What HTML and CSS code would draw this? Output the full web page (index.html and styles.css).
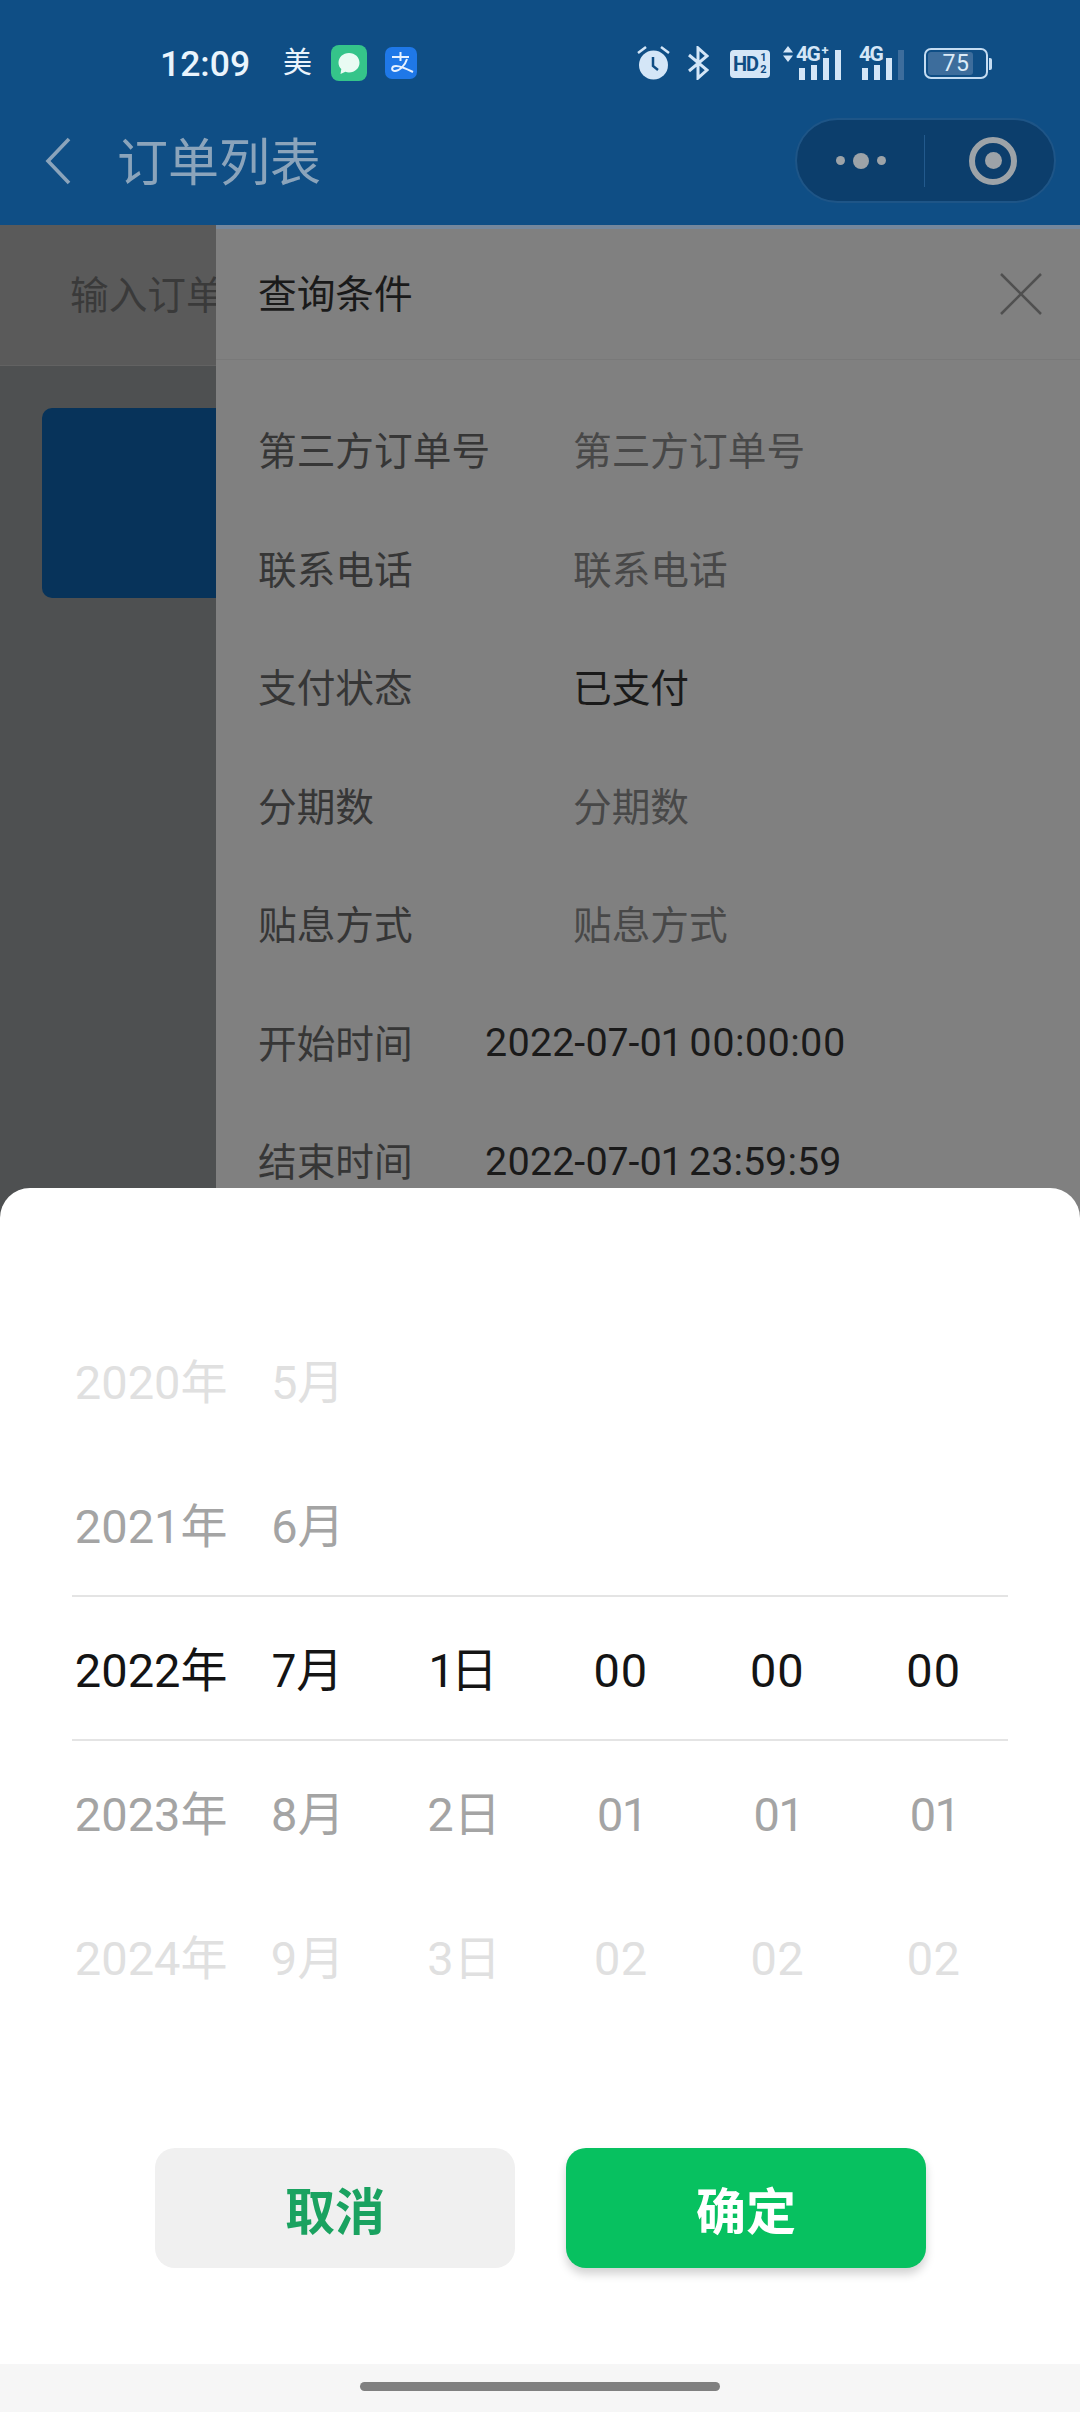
FILE: index.html
```html
<!DOCTYPE html>
<html lang="zh-CN">
<head>
    <meta charset="UTF-8">
    <meta name="viewport" content="width=device-width, initial-scale=1.0">
    <title>订单列表</title>
    <link rel="stylesheet" href="styles.css">
</head>
<body>
    <div class="screen">
        <header class="top-bar">
            <div class="status-bar">
                <span class="clock">12:09</span>
                <span class="status-char">美</span>
                <svg class="app-green" width="36" height="36" viewBox="0 0 36 36">
                    <rect width="36" height="36" rx="8" fill="#35c48a"/>
                    <path d="M18 8c6 0 10.500 4.300 10.500 9.700S24 27.400 18 27.400c-1.300 0-2.500-.2-3.600-.6L9.500 29l.8-5c-1.800-1.700-2.800-3.900-2.800-6.300C7.500 12.300 12 8 18 8z" fill="#e9fbf3"/>
                </svg>
                <svg class="app-alipay" width="32" height="32" viewBox="0 0 32 32">
                    <rect width="32" height="32" rx="7" fill="#1f78e8"/>
                    <path d="M7 10h17M15.500 5v9M22 12c-2 7-8 12-12 12-4 0-4-5 1-5 4 0 11 3 17 6" fill="none" stroke="#e8f2ff" stroke-width="2"/>
                </svg>
                <div class="status-icons">
                    <svg class="icon-alarm" width="33" height="35" viewBox="0 0 33 35">
                        <circle cx="16.500" cy="20" r="14.500" fill="#d4e6f7"/>
                        <path d="M16 12v9l5 4" fill="none" stroke="#0f4d84" stroke-width="2.500"/>
                        <path d="M1 8l8-6M32 8l-8-6" stroke="#d4e6f7" stroke-width="2.500"/>
                    </svg>
                    <svg class="icon-bt" width="21" height="34" viewBox="0 0 21 34">
                        <path d="M1 9l18 15-9 8V2l9 8L1 25" fill="none" stroke="#d4e6f7" stroke-width="3"/>
                    </svg>
                    <span class="hd-badge">HD<span class="hd-sim">1<br>2</span></span>
                    <div class="signal signal-first">
                        <svg class="updown" width="10" height="16" viewBox="0 0 10 16">
                            <path d="M5 0l5 6.500H0zM5 16l5-6.500H0z" fill="#d4e6f7"/>
                        </svg>
                        <span class="net-label">4G<sup>+</sup></span>
                        <div class="bars">
                            <i class="bar b1"></i><i class="bar b2"></i><i class="bar b3"></i><i class="bar b4"></i>
                        </div>
                    </div>
                    <div class="signal signal-second">
                        <span class="net-label">4G</span>
                        <div class="bars">
                            <i class="bar b1"></i><i class="bar b2"></i><i class="bar b3"></i><i class="bar b4 off"></i>
                        </div>
                    </div>
                    <div class="battery">
                        <div class="battery-body"><span class="battery-fill"></span><span class="battery-text">75</span></div>
                        <span class="battery-nub"></span>
                    </div>
                </div>
            </div>
            <div class="nav-bar">
                <svg class="back" width="26" height="48" viewBox="0 0 26 48">
                    <path d="M24 2L3 24l21 22" fill="none" stroke="#8ba4bb" stroke-width="3.600"/>
                </svg>
                <h1 class="nav-title">订单列表</h1>
                <div class="capsule">
                    <div class="capsule-dots">
                        <i class="dot"></i><i class="dot big"></i><i class="dot"></i>
                    </div>
                    <span class="capsule-line"></span>
                    <div class="capsule-target"><i></i></div>
                </div>
            </div>
        </header>

        <main class="content">
            <section class="list-side">
                <div class="search-row">输入订单号</div>
                <div class="order-card"></div>
            </section>

            <aside class="filter-panel">
                <div class="filter-head">
                    <span class="filter-title">查询条件</span>
                    <svg width="44" height="44" viewBox="0 0 44 44">
                        <path d="M2 2l40 40M42 2L2 42" stroke="#505050" stroke-width="2.500"/>
                    </svg>
                </div>
                <div class="filter-list">
                    <div class="filter-row"><label>第三方订单号</label><span class="hint">第三方订单号</span></div>
                    <div class="filter-row"><label>联系电话</label><span class="hint">联系电话</span></div>
                    <div class="filter-row"><label>支付状态</label><span class="val">已支付</span></div>
                    <div class="filter-row"><label>分期数</label><span class="hint">分期数</span></div>
                    <div class="filter-row"><label>贴息方式</label><span class="hint">贴息方式</span></div>
                    <div class="filter-row"><label>开始时间</label><span class="val date">2022-07-01 00:00:00</span></div>
                    <div class="filter-row"><label>结束时间</label><span class="val date">2022-07-01 23:59:59</span></div>
                </div>
            </aside>
        </main>

        <div class="sheet">
            <div class="picker">
                <div class="picker-row far"><span>2020年</span><span>5月</span></div>
                <div class="picker-row near"><span>2021年</span><span>6月</span></div>
                <div class="picker-row current"><span>2022年</span><span>7月</span><span>1日</span><span>00</span><span>00</span><span>00</span></div>
                <div class="picker-row near"><span>2023年</span><span>8月</span><span>2日</span><span>01</span><span>01</span><span>01</span></div>
                <div class="picker-row far"><span>2024年</span><span>9月</span><span>3日</span><span>02</span><span>02</span><span>02</span></div>
            </div>
            <div class="sheet-buttons">
                <button class="btn btn-cancel">取消</button>
                <button class="btn btn-ok">确定</button>
            </div>
            <div class="home-strip"><span class="home-bar"></span></div>
        </div>
    </div>
</body>
</html>
```
FILE: styles.css
```css
* {
    box-sizing: border-box;
}
body {
    margin: 0;
    font-family: Roboto, "Noto Sans CJK SC", sans-serif;
    background: #808080;
}
.screen {
    position: relative;
    width: 1080px;
    height: 2412px;
    overflow: hidden;
    display: flex;
    flex-direction: column;
}

/* top blue area */
.top-bar {
    height: 225px;
    background: #0f4e85;
    flex: none;
}
.status-bar {
    height: 100px;
    padding: 45px 88px 0 160px;
    display: flex;
    align-items: flex-start;
    color: #eaf4fc;
}
.clock {
    font-size: 35.500px;
    font-weight: 500;
    line-height: 38px;
    width: 123px;
}
.status-char {
    font-size: 29px;
    line-height: 36px;
    width: 48px;
}
.app-alipay {
    margin: 2px 0 0 18px;
}
.status-icons {
    margin-left: auto;
    display: flex;
    align-items: flex-start;
    color: #d4e6f7;
}
.icon-bt {
    margin: 1px 0 0 18px;
}
.hd-badge {
    margin: 5px 0 0 21px;
    width: 40px;
    height: 28px;
    background: #d4e6f7;
    border-radius: 4px;
    color: #0f4d84;
    font-size: 20px;
    font-weight: 700;
    line-height: 28px;
    padding-left: 3px;
    display: flex;
    letter-spacing: -1px;
}
.hd-sim {
    font-size: 11px;
    line-height: 12px;
    margin: 2px 0 0 2px;
    letter-spacing: 0;
}
.signal {
    position: relative;
    height: 34px;
    display: flex;
    align-items: flex-start;
}
.signal-first {
    margin: 1px 0 0 13px;
    width: 60px;
}
.signal-second {
    margin: 1px 0 0 16px;
    width: 47px;
}
.updown {
    position: absolute;
    left: 0;
    top: 0;
}
.net-label {
    position: absolute;
    top: -1px;
    font-size: 21px;
    font-weight: 700;
    line-height: 18px;
    letter-spacing: -1.500px;
    white-space: nowrap;
}
.signal-first .net-label {
    left: 13px;
}
.signal-second .net-label {
    left: 0;
}
.net-label sup {
    font-size: 13px;
    line-height: 0;
    vertical-align: 6px;
    margin-left: 2px;
}
.bars {
    position: absolute;
    bottom: 0;
    display: flex;
    align-items: flex-end;
    gap: 6px;
}
.signal-first .bars {
    left: 16px;
}
.signal-second .bars {
    left: 3px;
}
.bar {
    display: block;
    width: 6px;
    background: #d4e6f7;
}
.b1 {
    height: 12px;
}
.b2 {
    height: 15px;
}
.b3 {
    height: 22px;
}
.b4 {
    height: 30px;
}
.b4.off {
    background: #3d6d9c;
}
.battery {
    margin: 3px 0 0 18px;
    display: flex;
    align-items: center;
}
.battery-body {
    position: relative;
    width: 64px;
    height: 31px;
    border: 2px solid #c4dcf2;
    border-radius: 7px;
    text-align: center;
    overflow: hidden;
}
.battery-fill {
    position: absolute;
    left: 2px;
    top: 2px;
    bottom: 2px;
    width: 45px;
    border-radius: 3px;
    background: #3d6d9c;
}
.battery-text {
    position: relative;
    font-size: 23px;
    line-height: 27px;
    letter-spacing: .5px;
    display: block;
    color: #dcebf8;
}
.battery-nub {
    width: 3px;
    height: 12px;
    margin-left: 1px;
    background: #c4dcf2;
    border-radius: 0 2px 2px 0;
}

.nav-bar {
    height: 125px;
    padding: 18px 24px 0 45px;
    display: flex;
    align-items: flex-start;
    color: #8ba4bb;
}
.back {
    margin-top: 19px;
}
.nav-title {
    margin: 3px 0 0 46px;
    font-size: 51px;
    font-weight: 400;
    line-height: 85px;
}
.capsule {
    margin-left: auto;
    width: 261px;
    height: 85px;
    background: #0c3e6c;
    border: 2px solid #1e5587;
    border-radius: 43px;
    display: flex;
    align-items: center;
}
.capsule-dots {
    width: 127px;
    display: flex;
    justify-content: center;
    align-items: center;
    gap: 8px;
}
.dot {
    width: 9px;
    height: 9px;
    border-radius: 50%;
    background: #9da3a8;
}
.dot.big {
    width: 16px;
    height: 16px;
}
.capsule-line {
    width: 1px;
    height: 52px;
    background: #235a8d;
}
.capsule-target {
    margin-left: 44px;
    width: 48px;
    height: 48px;
    border: 6px solid #9da3a8;
    border-radius: 50%;
    display: flex;
    align-items: center;
    justify-content: center;
}
.capsule-target i {
    width: 17px;
    height: 17px;
    background: #9da3a8;
    border-radius: 50%;
}

/* page under the dim layer */
.content {
    flex: 1;
    display: flex;
    min-height: 0;
}
.list-side {
    width: 216px;
    background: #4e5051;
    overflow: hidden;
}
.search-row {
    height: 141px;
    padding-left: 70px;
    background: #5a5a5a;
    border-bottom: 1px solid #626262;
    color: #3a3a3a;
    font-size: 38.700px;
    line-height: 141px;
    white-space: nowrap;
}
.order-card {
    margin: 42px 0 0 42px;
    height: 190px;
    width: 220px;
    background: #07335a;
    border-radius: 10px;
}
.filter-panel {
    flex: 1;
    background: #808080;
    border-top: 4px solid #75879c;
}
.filter-head {
    height: 131px;
    padding: 0 37px 0 42px;
    border-bottom: 1px solid #797979;
    display: flex;
    align-items: center;
    justify-content: space-between;
}
.filter-title {
    margin-bottom: 6px;
    font-size: 38.700px;
    color: #1a1a1a;
}
.filter-list {
    padding: 29px 0 0 42px;
}
.filter-row {
    height: 118.500px;
    display: flex;
    align-items: center;
    font-size: 38.700px;
}
.filter-row label {
    color: #363636;
    width: 315px;
    flex: none;
}
.hint {
    color: #484848;
}
.val {
    color: #1a1a1a;
}
.val.date {
    margin: 4px 0 0 -88px;
    font-size: 39.400px;
    font-variant-numeric: proportional-nums;
}

/* bottom picker */
.sheet {
    position: absolute;
    left: 0;
    right: 0;
    bottom: 0;
    height: 1224px;
    background: #fff;
    border-radius: 30px 30px 0 0;
    padding-top: 119px;
    display: flex;
    flex-direction: column;
}
.picker {
    padding: 0 72px;
}
.picker-row {
    height: 144px;
    padding: 46px 0 0 1px;
    display: grid;
    grid-template-columns: repeat(6, 156.400px);
    align-items: baseline;
    justify-items: center;
    font-size: 47px;
    line-height: 60px;
    font-variant-numeric: proportional-nums;
}
.picker-row span:first-child {
    font-variant-numeric: tabular-nums;
}
.picker-row.far {
    color: #e0e0e0;
}
.picker-row.near {
    color: #a4a4a4;
}
.picker-row.current {
    height: 146px;
    padding-top: 44px;
    color: #141414;
    border-top: 2px solid #e4e4e4;
    border-bottom: 2px solid #e4e4e4;
}
.current ~ .picker-row {
    padding-top: 44px;
}
.sheet-buttons {
    margin-top: 119px;
    padding: 0 154px 0 155px;
    display: flex;
    justify-content: space-between;
}
.btn {
    width: 360px;
    height: 120px;
    border: none;
    border-radius: 20px;
    font-family: Roboto, "Noto Sans CJK SC", sans-serif;
    font-size: 50px;
    font-weight: 700;
}
.btn-cancel {
    background: #f0f0f0;
    color: #1aa260;
}
.btn-ok {
    background: #07c160;
    color: #fff;
    box-shadow: 0 6px 10px rgba(0,0,0,0.18);
}
.home-strip {
    margin-top: auto;
    height: 48px;
    background: #f6f6f6;
    padding-top: 18px;
    display: flex;
    justify-content: center;
}
.home-bar {
    width: 360px;
    height: 9px;
    border-radius: 5px;
    background: #808080;
}
```
